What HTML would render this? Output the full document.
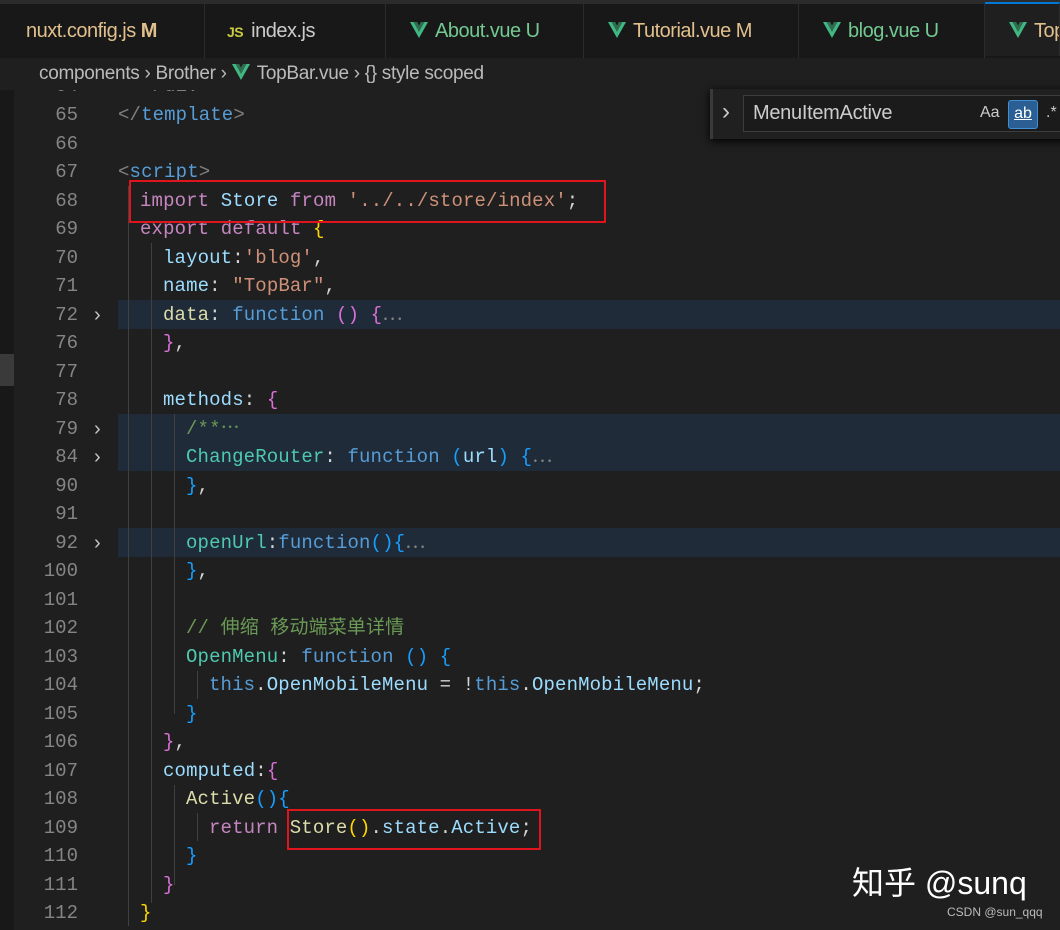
<!DOCTYPE html>
<html><head><meta charset="utf-8"><style>
*{margin:0;padding:0;box-sizing:border-box}
body{width:1060px;height:930px;background:#1f1f1f;overflow:hidden;position:relative;font-family:"Liberation Sans","Noto Sans CJK SC",sans-serif}
.tabs{position:absolute;left:0;top:0;width:1060px;height:58px;background:#181818;border-top:4px solid #2b2b2b;z-index:5}
.tab{position:absolute;top:0;height:54px;border-right:1px solid #2b2b2b;font-size:20px;line-height:54px;padding-left:24px;color:#ccc;white-space:nowrap;overflow:hidden;letter-spacing:-0.5px}
.v{display:inline-block;width:18px;height:16px;margin-right:7px;vertical-align:-1px}
.crumb{position:absolute;left:0;top:58px;width:1060px;height:32px;background:#1f1f1f;color:#bbb;font-size:19px;line-height:32px;padding-left:39px;z-index:5;letter-spacing:-0.3px}
.gut{position:absolute;left:0;top:90px;width:14px;height:840px;background:#181818}
.ln{position:absolute;left:20px;width:58px;text-align:right;color:#858585;font:19px/28.5px "Liberation Mono",monospace}
.row{position:absolute;left:118px;width:942px;height:28.5px}
.hl{background:#1f2b38}
.code{position:absolute;white-space:pre;font:19px/28.5px "Liberation Mono","Noto Sans CJK SC",monospace;color:#d4d4d4;letter-spacing:0.13px}
.fa{position:absolute;left:94px;color:#c5c5c5;font:20px/28.5px "Liberation Sans",sans-serif}
.k{color:#c586c0}.s{color:#ce9178}.p{color:#9cdcfe}.f{color:#569cd6}.y{color:#dcdcaa}.t{color:#4ec9b0}.c{color:#6a9955}
.b1{color:#ffd700}.b2{color:#da70d6}.b3{color:#179fff}.g{color:#808080}
.guide{position:absolute;width:1px;background:#404040}
.box{position:absolute;border:2px solid #e0141c}
</style></head><body>
<svg width="0" height="0" style="position:absolute"><defs><symbol id="vue" viewBox="0 0 18 16"><path d="M0 0H7L9 4 11 0H18L9 16Z" fill="#41b883"/><path d="M3.5 0H7L9 4 11 0H14.5L9 10Z" fill="#2f6b4f"/></symbol></defs></svg>
<div class="tabs">
<div class="tab" style="left:0;width:205px;padding-left:26px;color:#e2c08d">nuxt.config.js <b>M</b></div>
<div class="tab" style="left:205px;width:181px;padding-left:22px"><span style="color:#cbcb41;font-size:14px;font-weight:bold;margin-right:8px">JS</span>index.js</div>
<div class="tab" style="left:386px;width:198px;color:#73c991"><svg class="v"><use href="#vue"/></svg>About.vue U</div>
<div class="tab" style="left:584px;width:215px;color:#e2c08d"><svg class="v"><use href="#vue"/></svg>Tutorial.vue M</div>
<div class="tab" style="left:799px;width:186px;color:#73c991"><svg class="v"><use href="#vue"/></svg>blog.vue U</div>
<div class="tab" style="left:985px;width:75px;background:#1f1f1f;border-top:2px solid #0078d4;top:-2px;color:#e2c08d"><svg class="v"><use href="#vue"/></svg>TopBar</div>
</div>
<div class="crumb">components › Brother › <svg class="v"><use href="#vue"/></svg>TopBar.vue › {} style scoped</div>
<div class="gut"></div>
<div style="position:absolute;left:0;top:354px;width:14px;height:32px;background:#3a3a3a"></div>

<div class="row hl" style="top:300px"></div>
<div class="row hl" style="top:414px;height:57px"></div>
<div class="row hl" style="top:528px"></div>

<div class="guide" style="left:128px;top:186px;height:740px"></div>
<div class="guide" style="left:151px;top:243px;height:660px"></div>
<div class="guide" style="left:174px;top:414px;height:300px"></div>
<div class="guide" style="left:174px;top:785px;height:100px"></div>
<div class="guide" style="left:197px;top:671px;height:28px"></div>
<div class="guide" style="left:197px;top:813px;height:28px"></div>

<div class="ln" style="top:72px">64</div><div class="code" style="left:118px;top:72px"><span class="g">  &lt;/div&gt;</span></div>
<div class="ln" style="top:101px">65</div><div class="code" style="left:118px;top:101px"><span class="g">&lt;/</span><span class="f">template</span><span class="g">&gt;</span></div>
<div class="ln" style="top:129.5px">66</div>
<div class="ln" style="top:158px">67</div><div class="code" style="left:118px;top:158px"><span class="g">&lt;</span><span class="f">script</span><span class="g">&gt;</span></div>
<div class="ln" style="top:186.5px">68</div><div class="code" style="left:140px;top:186.5px"><span class="k">import</span> <span class="p">Store</span> <span class="k">from</span> <span class="s">'../../store/index'</span>;</div>
<div class="ln" style="top:215px">69</div><div class="code" style="left:140px;top:215px"><span class="k">export</span> <span class="k">default</span> <span class="b1">{</span></div>
<div class="ln" style="top:243.5px">70</div><div class="code" style="left:163px;top:243.5px"><span class="p">layout</span>:<span class="s">'blog'</span>,</div>
<div class="ln" style="top:272px">71</div><div class="code" style="left:163px;top:272px"><span class="p">name</span>: <span class="s">"TopBar"</span>,</div>
<div class="ln" style="top:300.5px">72</div><div class="fa" style="top:300.5px">›</div><div class="code" style="left:163px;top:300.5px"><span class="y">data</span>: <span class="f">function</span> <span class="b2">()</span> <span class="b2">{</span><span class="g">⋯</span></div>
<div class="ln" style="top:329px">76</div><div class="code" style="left:163px;top:329px"><span class="b2">}</span>,</div>
<div class="ln" style="top:357.5px">77</div>
<div class="ln" style="top:386px">78</div><div class="code" style="left:163px;top:386px"><span class="p">methods</span>: <span class="b2">{</span></div>
<div class="ln" style="top:414.5px">79</div><div class="fa" style="top:414.5px">›</div><div class="code" style="left:186px;top:414.5px"><span class="c">/**⋯</span></div>
<div class="ln" style="top:443px">84</div><div class="fa" style="top:443px">›</div><div class="code" style="left:186px;top:443px"><span class="t">ChangeRouter</span>: <span class="f">function</span> <span class="b3">(</span><span class="p">url</span><span class="b3">)</span> <span class="b3">{</span><span class="g">⋯</span></div>
<div class="ln" style="top:471.5px">90</div><div class="code" style="left:186px;top:471.5px"><span class="b3">}</span>,</div>
<div class="ln" style="top:500px">91</div>
<div class="ln" style="top:528.5px">92</div><div class="fa" style="top:528.5px">›</div><div class="code" style="left:186px;top:528.5px"><span class="t">openUrl</span>:<span class="f">function</span><span class="b3">(){</span><span class="g">⋯</span></div>
<div class="ln" style="top:557px">100</div><div class="code" style="left:186px;top:557px"><span class="b3">}</span>,</div>
<div class="ln" style="top:585.5px">101</div>
<div class="ln" style="top:614px">102</div><div class="code" style="left:186px;top:614px"><span class="c">// 伸缩 移动端菜单详情</span></div>
<div class="ln" style="top:642.5px">103</div><div class="code" style="left:186px;top:642.5px"><span class="t">OpenMenu</span>: <span class="f">function</span> <span class="b3">()</span> <span class="b3">{</span></div>
<div class="ln" style="top:671px">104</div><div class="code" style="left:209px;top:671px"><span class="f">this</span>.<span class="p">OpenMobileMenu</span> = !<span class="f">this</span>.<span class="p">OpenMobileMenu</span>;</div>
<div class="ln" style="top:699.5px">105</div><div class="code" style="left:186px;top:699.5px"><span class="b3">}</span></div>
<div class="ln" style="top:728px">106</div><div class="code" style="left:163px;top:728px"><span class="b2">}</span>,</div>
<div class="ln" style="top:756.5px">107</div><div class="code" style="left:163px;top:756.5px"><span class="p">computed</span>:<span class="b2">{</span></div>
<div class="ln" style="top:785px">108</div><div class="code" style="left:186px;top:785px"><span class="y">Active</span><span class="b3">(){</span></div>
<div class="ln" style="top:813.5px">109</div><div class="code" style="left:209px;top:813.5px"><span class="k">return</span> <span class="y">Store</span><span class="b1">()</span>.<span class="p">state</span>.<span class="p">Active</span>;</div>
<div class="ln" style="top:842px">110</div><div class="code" style="left:186px;top:842px"><span class="b3">}</span></div>
<div class="ln" style="top:870.5px">111</div><div class="code" style="left:163px;top:870.5px"><span class="b2">}</span></div>
<div class="ln" style="top:899px">112</div><div class="code" style="left:140px;top:899px"><span class="b1">}</span></div>

<div class="box" style="left:129px;top:180px;width:477px;height:43px"></div>
<div class="box" style="left:287px;top:809px;width:254px;height:41px"></div>

<div style="position:absolute;left:710px;top:89px;width:360px;height:50px;background:#202020;border-left:3px solid #3a3a3a;box-shadow:0 2px 8px #000;z-index:6"></div>
<div style="position:absolute;left:722px;top:98px;color:#ccc;font-size:24px;z-index:7">›</div>
<div style="position:absolute;left:743px;top:95px;width:330px;height:37px;background:#1b1b1b;border:1px solid #3c3c3c;color:#ccc;font-size:20px;line-height:35px;padding-left:9px;z-index:7;letter-spacing:-0.3px">MenuItemActive</div>
<div style="position:absolute;left:980px;top:104px;color:#ccc;font-size:16px;z-index:8">Aa</div>
<div style="position:absolute;left:1008px;top:100px;width:30px;height:29px;background:#2b5f94;border:1px solid #3d8fd6;border-radius:3px;color:#fff;font-size:16px;text-align:center;line-height:26px;text-decoration:underline;z-index:8">ab</div>
<div style="position:absolute;left:1046px;top:104px;color:#ccc;font-size:16px;z-index:8">.*</div>

<div style="position:absolute;left:852px;top:858px;color:#fff;font-size:32px">知乎 @sunq</div>
<div style="position:absolute;left:947px;top:905px;color:#bbb;font-size:12px">CSDN @sun_qqq</div>
</body></html>
